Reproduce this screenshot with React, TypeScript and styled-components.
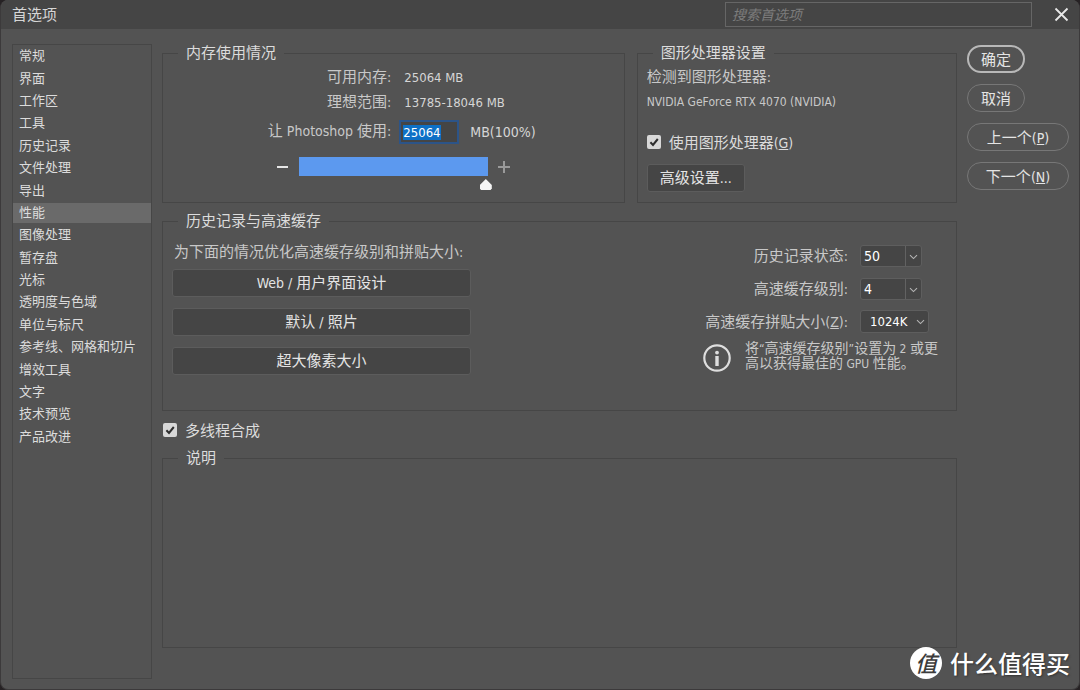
import React, { useEffect, useRef, useState } from "react";
import styled, { createGlobalStyle } from "styled-components";

const latin = '"DejaVu Sans Condensed", "Noto Sans"';
const cjk = '"Noto Sans CJK SC", sans-serif';

const GlobalStyle = createGlobalStyle`
  * { box-sizing: border-box; }
  body { margin: 0; background: #262224; }
  body, button, input, select {
    font-family: "Noto Sans CJK SC", sans-serif;
    font-size: 15px;
    color: #d6d6d6;
  }
`;

const Latin = styled.span<{ $size?: number }>`
  font-family: ${latin}, ${cjk};
  font-size: ${(p) => p.$size ?? 14}px;
  line-height: 1;
`;

const Dialog = styled.div`
  position: relative;
  display: flex;
  flex-direction: column;
  min-height: 100vh;
  background: #535353;
  border: 1px solid #3c3a3b;
  border-top: 0;
  border-radius: 8px;
  overflow: hidden;
`;

const TitleBar = styled.header`
  display: flex;
  align-items: center;
  height: 29px;
  padding: 0 9px 0 11px;
  background: #454545;
`;

const Title = styled.h1`
  flex: 1;
  margin: 0;
  padding-bottom: 2px;
  font-size: 15px;
  line-height: 18px;
  font-weight: 400;
`;

const Search = styled.input`
  width: 307px;
  height: 25px;
  margin-right: 21px;
  padding: 0 6px 2px;
  border: 1px solid #666;
  background: #454545;
  font-size: 14px;
  font-style: italic;
  &::placeholder { color: #7c7c7c; opacity: 1; }
`;

const CloseButton = styled.button`
  display: flex;
  padding: 0;
  border: 0;
  background: none;
  color: #e8e8e8;
`;

const Body = styled.div`
  flex: 1;
  display: flex;
  align-items: stretch;
  gap: 10px;
  padding: 15px 10px 10px 11px;
`;

const Sidebar = styled.nav`
  width: 140px;
  flex: none;
  border: 1px solid #464646;
`;

const SectionList = styled.ul`
  display: grid;
  grid-auto-rows: 1fr;
  align-items: center;
  height: 403px;
  margin: 0;
  padding: 0;
  list-style: none;
`;

const SectionLink = styled.a<{ $active: boolean }>`
  display: block;
  padding: 0 0 2px 6px;
  font-size: 13px;
  line-height: 18px;
  color: #dcdcdc;
  text-decoration: none;
  background: ${(p) => (p.$active ? "#6a6a6a" : "transparent")};
`;

const Main = styled.main`
  flex: 1;
  min-width: 0;
  display: flex;
  flex-direction: column;
  padding-bottom: 31px;
`;

const TopRow = styled.div`
  display: flex;
  gap: 12px;
  margin-bottom: 9px;
`;

const Group = styled.fieldset<{ $grow?: number; $height?: number }>`
  flex: ${(p) => (p.$grow ? `${p.$grow} 1 0` : "none")};
  min-width: 0;
  min-height: ${(p) => (p.$height ? `${p.$height}px` : "0")};
  margin: 0;
  padding: 0;
  border: 1px solid #464646;
`;

const Legend = styled.legend`
  margin-left: 15px;
  padding: 0 8px 2px;
  line-height: 16px;
  color: #dcdcdc;
`;

const MemoryGrid = styled.div`
  display: grid;
  grid-template-columns: 1fr 1fr;
  grid-template-rows: 25px 25px 34px;
  align-items: center;
  padding-top: 2px;
`;

const FieldLabel = styled.label`
  padding-bottom: 2px;
  text-align: right;
  line-height: 18px;
  color: #c8c8c8;
`;

const MemoryLabel = styled(FieldLabel)`
  padding-right: 2px;
`;

const MemoryValue = styled.div`
  padding: 0 0 2px 11px;
  line-height: 18px;
`;

const MemoryEntry = styled.div`
  display: flex;
  align-items: center;
  gap: 11px;
  padding: 2px 0 0 6px;
`;

const MemoryInput = styled.input`
  width: 60px;
  height: 24px;
  padding: 0 2px;
  border: 2px solid #2c5488;
  outline: 0;
  background: #454545;
  font-family: ${latin}, sans-serif;
  font-size: 13px;
  color: #fff;
  &::selection { background: #0e70c6; color: #fff; }
`;

const SliderRow = styled.div`
  display: flex;
  justify-content: center;
  align-items: flex-start;
  gap: 10px;
  padding: 9px 0 0 0;
`;

const StepButton = styled.button<{ $dim?: boolean }>`
  display: flex;
  align-items: center;
  height: 19px;
  padding: 0;
  border: 0;
  background: none;
  color: ${(p) => (p.$dim ? "#9a9a9a" : "#e6e6e6")};
`;

const Slider = styled.input`
  appearance: none;
  width: 193px;
  height: 34px;
  margin: 0 -4px 0 0;
  background: linear-gradient(#5c99ef, #5c99ef) no-repeat 0 0 / calc(100% - 4px) 19px;
  &::-webkit-slider-runnable-track { height: 34px; }
  &::-webkit-slider-thumb {
    appearance: none;
    width: 12px;
    height: 11px;
    margin-top: 22px;
    background: #f4f4f4;
    clip-path: polygon(50% 0, 100% 55%, 100% 85%, 90% 100%, 10% 100%, 0 85%, 0 55%);
  }
`;

const GpuContent = styled.div`
  display: flex;
  flex-direction: column;
  align-items: flex-start;
  padding: 2px 9px 0;
`;

const Line = styled.p`
  margin: 0;
  line-height: 24px;
  color: #c8c8c8;
`;

const CheckLabel = styled.label`
  display: flex;
  align-items: center;
  gap: 8px;
  line-height: 20px;
  color: #dcdcdc;
`;

const GpuCheck = styled(CheckLabel)`
  margin: 20px 0 12px;
`;

const ThreadCheck = styled(CheckLabel)`
  height: 38px;
  padding-left: 1px;
`;

const CheckWrap = styled.span`
  display: grid;
  width: 14px;
  height: 14px;
  > * { grid-area: 1 / 1; }
  > svg { pointer-events: none; }
`;

const CheckInput = styled.input`
  appearance: none;
  width: 14px;
  height: 14px;
  margin: 0;
  border-radius: 2px;
  background: #d8d8d8;
  &:not(:checked) + svg { visibility: hidden; }
`;

const PanelButton = styled.button`
  height: 28px;
  padding: 0 12px 2px;
  border: 1px solid #5c5c5c;
  border-radius: 3px;
  background: #454545;
  line-height: 20px;
  color: #e4e4e4;
`;

const HistoryContent = styled.div`
  display: flex;
  justify-content: space-between;
  padding: 0 17px 0 9px;
`;

const PresetsBlock = styled.div`
  display: flex;
  flex-direction: column;
  gap: 8px;
  width: 299px;
  padding-top: 11px;
`;

const PresetsTitle = styled.p`
  margin: 0;
  padding-left: 2px;
  line-height: 20px;
  color: #c8c8c8;
  white-space: nowrap;
`;

const PresetList = styled.div`
  display: flex;
  flex-direction: column;
  gap: 11px;
`;

const CacheBlock = styled.div`
  width: 236px;
  padding-top: 9px;
`;

const CacheGrid = styled.div`
  display: grid;
  grid-template-columns: 145px auto;
  grid-auto-rows: 33px;
  align-items: center;
  justify-items: start;
  column-gap: 12px;
  ${FieldLabel} { justify-self: end; white-space: nowrap; }
`;

const Combo = styled.div`
  display: flex;
  width: 62px;
  height: 22px;
  border: 1px solid #5e5e5e;
  border-radius: 3px;
  background: #454545;
`;

const ComboInput = styled.input`
  flex: 1;
  min-width: 0;
  padding: 0 3px;
  border: 0;
  background: none;
  font-family: ${latin}, sans-serif;
  font-size: 14px;
  color: #fff;
`;

const ComboButton = styled.button`
  display: flex;
  align-items: center;
  justify-content: center;
  width: 16px;
  padding: 2px 0 0;
  border: 0;
  border-left: 1px solid #626262;
  background: none;
  color: #b4b4b4;
`;

const SelectWrap = styled.div`
  display: grid;
  align-items: center;
  width: 69px;
  color: #b4b4b4;
  > * { grid-area: 1 / 1; }
  > svg { justify-self: end; margin-right: 4px; pointer-events: none; }
`;

const TileSelect = styled.select`
  appearance: none;
  width: 100%;
  height: 23px;
  padding: 0 9px;
  border: 1px solid #5e5e5e;
  border-radius: 3px;
  background: #454545;
  font-family: ${latin}, sans-serif;
  font-size: 13px;
  color: #fff;
`;

const Note = styled.div`
  display: flex;
  align-items: center;
  gap: 14px;
  margin-top: 2px;
  svg { flex: none; }
`;

const NoteText = styled.p`
  margin: 0;
  padding-bottom: 6px;
  font-size: 14px;
  line-height: 14px;
  color: #c8c8c8;
  white-space: nowrap;
`;

const Actions = styled.div`
  display: flex;
  flex-direction: column;
  align-items: flex-start;
  gap: 11px;
  width: 102px;
  flex: none;
  padding-top: 1px;
`;

const Pill = styled.button<{ $primary?: boolean; $wide?: boolean }>`
  width: ${(p) => (p.$wide ? "102px" : "58px")};
  height: 28px;
  padding: 0;
  border: ${(p) => (p.$primary ? "2px solid #b8b8b8" : "1px solid #777")};
  border-radius: 14px;
  background: none;
  line-height: 20px;
  color: #e4e4e4;
`;

const Watermark = styled.div`
  position: absolute;
  right: 9px;
  bottom: 10px;
  display: flex;
  align-items: center;
  gap: 8px;
  font-size: 24px;
  line-height: 32px;
  font-weight: 500;
  color: #fff;
  text-shadow: 1px 1px 2px #333;
`;

const Seal = styled.span`
  width: 32px;
  height: 32px;
  border-radius: 50%;
  background: #fff;
  font-size: 22px;
  line-height: 30px;
  font-style: italic;
  text-align: center;
  text-shadow: none;
  color: #3c3c3c;
`;

const Chevron = () => (
  <svg width="9" height="6" viewBox="0 0 9 6" fill="none" stroke="currentColor" strokeWidth="1.1">
    <path d="M1 1.2 4.5 4.6 8 1.2" />
  </svg>
);

const Tick = () => (
  <svg width="14" height="14" viewBox="0 0 14 14" fill="none" stroke="#2e2e2e" strokeWidth="2">
    <path d="M3.4 7.2 6 9.9 10.8 4" />
  </svg>
);

const Checkbox = () => (
  <CheckWrap>
    <CheckInput type="checkbox" defaultChecked />
    <Tick />
  </CheckWrap>
);

const sections = [
  "常规", "界面", "工作区", "工具", "历史记录", "文件处理", "导出", "性能", "图像处理",
  "暂存盘", "光标", "透明度与色域", "单位与标尺", "参考线、网格和切片", "增效工具",
  "文字", "技术预览", "产品改进",
];

const maxMemory = 25064;

export default function App() {
  const memoryRef = useRef<HTMLInputElement>(null);
  const [memory, setMemory] = useState(maxMemory);
  const [active, setActive] = useState("性能");

  useEffect(() => {
    memoryRef.current?.focus();
    memoryRef.current?.select();
  }, []);

  return (
    <>
      <GlobalStyle />
      <Dialog role="dialog" aria-label="首选项">
        <TitleBar>
          <Title>首选项</Title>
          <Search placeholder="搜索首选项" aria-label="搜索首选项" />
          <CloseButton aria-label="关闭">
            <svg width="17" height="17" viewBox="0 0 17 17" fill="none" stroke="currentColor" strokeWidth="1.8">
              <path d="M2.5 2.5 14.5 14.5M14.5 2.5 2.5 14.5" />
            </svg>
          </CloseButton>
        </TitleBar>
        <Body>
          <Sidebar>
            <SectionList>
              {sections.map((name) => (
                <li key={name}>
                  <SectionLink href="#" $active={name === active} onClick={() => setActive(name)}>
                    {name}
                  </SectionLink>
                </li>
              ))}
            </SectionList>
          </Sidebar>
          <Main>
            <TopRow>
              <Group $grow={463} $height={159}>
                <Legend>内存使用情况</Legend>
                <MemoryGrid>
                  <MemoryLabel as="span">可用内存<Latin>:</Latin></MemoryLabel>
                  <MemoryValue><Latin $size={13}>25064 MB</Latin></MemoryValue>
                  <MemoryLabel as="span">理想范围<Latin>:</Latin></MemoryLabel>
                  <MemoryValue><Latin $size={13}>13785-18046 MB</Latin></MemoryValue>
                  <MemoryLabel htmlFor="memory">让<Latin> Photoshop </Latin>使用<Latin>:</Latin></MemoryLabel>
                  <MemoryEntry>
                    <MemoryInput
                      id="memory"
                      ref={memoryRef}
                      value={memory}
                      onChange={(e) => setMemory(Number(e.target.value) || 0)}
                    />
                    <Latin>MB({Math.round((memory / maxMemory) * 100)}%)</Latin>
                  </MemoryEntry>
                </MemoryGrid>
                <SliderRow>
                  <StepButton aria-label="减少" onClick={() => setMemory(memory - 1)}>
                    <svg width="12" height="12" viewBox="0 0 12 12" stroke="currentColor" strokeWidth="2">
                      <path d="M0 6H11" />
                    </svg>
                  </StepButton>
                  <Slider
                    type="range"
                    aria-label="内存使用量"
                    min={0}
                    max={maxMemory}
                    value={memory}
                    onChange={(e) => setMemory(Number(e.target.value))}
                  />
                  <StepButton $dim aria-label="增加" onClick={() => setMemory(Math.min(maxMemory, memory + 1))}>
                    <svg width="12" height="12" viewBox="0 0 12 12" stroke="currentColor" strokeWidth="2">
                      <path d="M0 6H12M6 0V12" />
                    </svg>
                  </StepButton>
                </SliderRow>
              </Group>
              <Group $grow={320}>
                <Legend>图形处理器设置</Legend>
                <GpuContent>
                  <Line>检测到图形处理器<Latin>:</Latin></Line>
                  <Line><Latin $size={12}>NVIDIA GeForce RTX 4070 (NVIDIA)</Latin></Line>
                  <GpuCheck>
                    <Checkbox />
                    <span>使用图形处理器<Latin>(<u>G</u>)</Latin></span>
                  </GpuCheck>
                  <PanelButton>高级设置<Latin>...</Latin></PanelButton>
                </GpuContent>
              </Group>
            </TopRow>
            <Group $height={199}>
              <Legend>历史记录与高速缓存</Legend>
              <HistoryContent>
                <PresetsBlock>
                  <PresetsTitle>为下面的情况优化高速缓存级别和拼贴大小<Latin>:</Latin></PresetsTitle>
                  <PresetList>
                    <PanelButton><Latin>Web / </Latin>用户界面设计</PanelButton>
                    <PanelButton>默认<Latin> / </Latin>照片</PanelButton>
                    <PanelButton>超大像素大小</PanelButton>
                  </PresetList>
                </PresetsBlock>
                <CacheBlock>
                  <CacheGrid>
                    <FieldLabel htmlFor="states">历史记录状态<Latin>:</Latin></FieldLabel>
                    <Combo>
                      <ComboInput id="states" defaultValue="50" />
                      <ComboButton aria-label="选择历史记录状态"><Chevron /></ComboButton>
                    </Combo>
                    <FieldLabel htmlFor="levels">高速缓存级别<Latin>:</Latin></FieldLabel>
                    <Combo>
                      <ComboInput id="levels" defaultValue="4" />
                      <ComboButton aria-label="选择高速缓存级别"><Chevron /></ComboButton>
                    </Combo>
                    <FieldLabel htmlFor="tile">高速缓存拼贴大小<Latin>(<u>Z</u>):</Latin></FieldLabel>
                    <SelectWrap>
                      <TileSelect id="tile" defaultValue="1024K">
                        <option>128K</option>
                        <option>132K</option>
                        <option>1024K</option>
                        <option>1028K</option>
                      </TileSelect>
                      <Chevron />
                    </SelectWrap>
                  </CacheGrid>
                  <Note>
                    <svg width="28" height="28" viewBox="0 0 28 28">
                      <circle cx="14" cy="14" r="12.7" fill="none" stroke="#dedede" strokeWidth="2.2" />
                      <circle cx="14" cy="8.6" r="1.9" fill="#dedede" />
                      <rect x="12.3" y="12" width="3.4" height="10" fill="#dedede" />
                    </svg>
                    <NoteText>
                      将<Latin $size={12}>“</Latin>高速缓存级别<Latin $size={12}>”</Latin>设置为
                      <Latin $size={12}> 2 </Latin>或更
                      <br />
                      高以获得最佳的<Latin $size={12}> GPU </Latin>性能。
                    </NoteText>
                  </Note>
                </CacheBlock>
              </HistoryContent>
            </Group>
            <ThreadCheck>
              <Checkbox />
              <span>多线程合成</span>
            </ThreadCheck>
            <Group $grow={1}>
              <Legend>说明</Legend>
            </Group>
          </Main>
          <Actions>
            <Pill $primary>确定</Pill>
            <Pill>取消</Pill>
            <Pill $wide>上一个<Latin>(<u>P</u>)</Latin></Pill>
            <Pill $wide>下一个<Latin>(<u>N</u>)</Latin></Pill>
          </Actions>
        </Body>
        <Watermark>
          <Seal>值</Seal>
          <span>什么值得买</span>
        </Watermark>
      </Dialog>
    </>
  );
}
